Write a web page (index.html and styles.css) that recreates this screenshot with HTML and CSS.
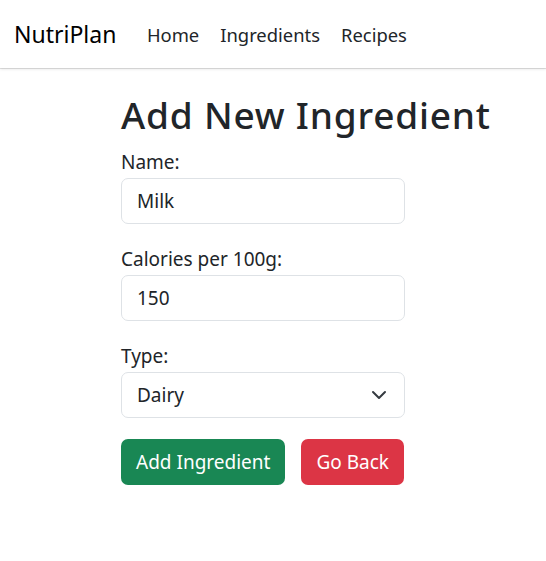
FILE: index.html
```html
<!DOCTYPE html>
<html lang="en">
<head>
<meta charset="utf-8">
<title>NutriPlan - Add Ingredient</title>
<link rel="stylesheet" href="styles.css">
</head>
<body>
<nav class="navbar">
  <a class="brand" href="#">NutriPlan</a>
  <ul class="nav">
    <li><a class="nav-link" href="#">Home</a></li>
    <li><a class="nav-link" href="#">Ingredients</a></li>
    <li><a class="nav-link" href="#">Recipes</a></li>
  </ul>
</nav>
<main class="page">
  <h1 class="title">Add New Ingredient</h1>
  <form class="form">
    <div class="field">
      <label class="label" for="name">Name:</label>
      <input class="control" id="name" type="text" value="Milk">
    </div>
    <div class="field">
      <label class="label" for="cal">Calories per 100g:</label>
      <input class="control" id="cal" type="text" value="150">
    </div>
    <div class="field">
      <label class="label" for="type">Type:</label>
      <div class="select-wrap">
        <select class="control select" id="type">
          <option>Dairy</option>
        </select>
        <svg class="chevron" viewBox="0 0 16 16" width="16" height="16" aria-hidden="true"><path d="m2 5 6 6 6-6" fill="none" stroke="#343a40" stroke-width="2" stroke-linecap="round" stroke-linejoin="round"/></svg>
      </div>
    </div>
    <div class="actions">
      <button class="btn btn-green" type="button">Add Ingredient</button>
      <button class="btn btn-red" type="button">Go Back</button>
    </div>
  </form>
</main>
</body>
</html>
```
FILE: styles.css
```css
* { box-sizing: border-box; }
body {
  margin: 0;
  font-family: "Noto Sans", "Open Sans", sans-serif;
  color: #212529;
  background: #fff;
  font-size: 19px;
}
.navbar {
  height: 68px;
  display: flex;
  align-items: center;
  padding: 0 14px;
  background: #fff;
  box-shadow: 0 1px 3px rgba(0,0,0,0.12), 0 1px 0 #e4e4e4;
}
.brand {
  font-size: 23px;
  color: #000;
  text-decoration: none;
  margin-right: 20px;
}
.nav {
  display: flex;
  list-style: none;
  margin: 0;
  padding: 0;
}
.nav-link {
  display: block;
  padding: 0 10.5px;
  font-size: 18.4px;
  color: #212529;
  text-decoration: none;
}
.page {
  padding-left: 121px;
  padding-top: 25px;
}
.title {
  font-size: 37px;
  font-weight: 500;
  line-height: 43px;
  letter-spacing: 0.8px;
  margin: 0 0 13px;
  white-space: nowrap;
}
.form {
  width: 284px;
}
.field {
  margin-bottom: 22px;
}
.label {
  display: block;
  line-height: 27px;
  margin-bottom: 2px;
  font-size: 19px;
}
.control {
  display: block;
  width: 100%;
  height: 46px;
  padding: 0 15px;
  font-family: inherit;
  font-size: 19px;
  color: #212529;
  background: #fff;
  border: 1px solid #dee2e6;
  border-radius: 7px;
  outline: none;
}
.select-wrap {
  position: relative;
}
.select {
  appearance: none;
  -webkit-appearance: none;
}
.chevron {
  position: absolute;
  right: 18px;
  top: 15px;
  pointer-events: none;
}
.actions {
  display: flex;
  gap: 16px;
  margin-top: -1px;
}
.btn {
  flex-shrink: 0;
  white-space: nowrap;
  height: 46px;
  padding: 0 15px;
  font-family: inherit;
  font-size: 19px;
  color: #fff;
  border: 0;
  border-radius: 7px;
}
.btn-green { background: #198754; }
.btn-red { background: #dc3545; }
```
